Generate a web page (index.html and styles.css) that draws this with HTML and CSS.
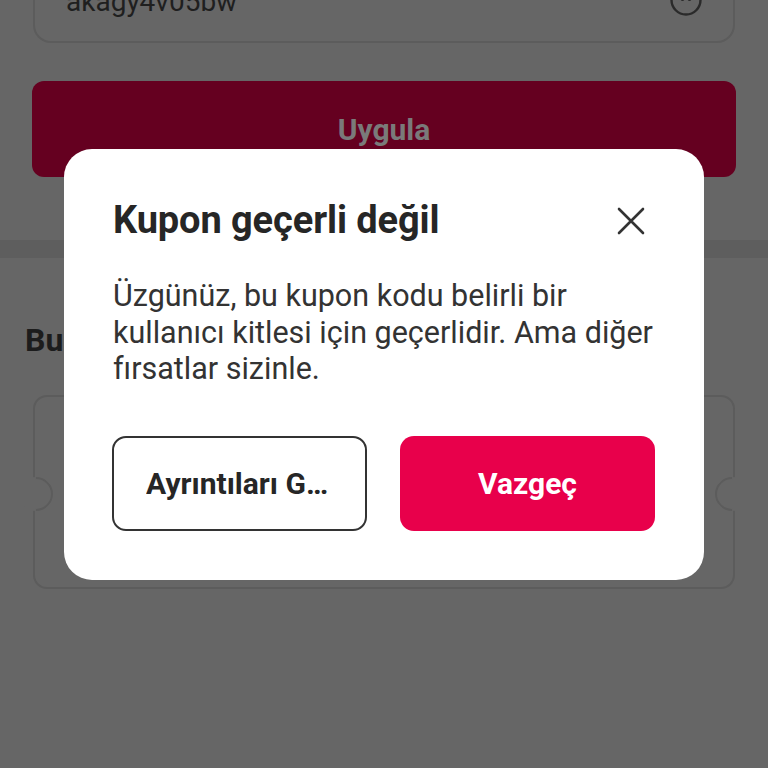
FILE: index.html
```html
<!DOCTYPE html>
<html lang="tr">
<head>
<meta charset="utf-8">
<title>Kupon</title>
<link rel="stylesheet" href="styles.css">
</head>
<body>
<main class="page">
  <section class="coupon-form">
    <div class="code-input">
      <span class="code-value">akagy4v05bw</span>
      <svg class="code-icon" width="34" height="34" viewBox="0 0 34 34" aria-hidden="true">
        <circle cx="17" cy="17" r="14.5" fill="none" stroke="#2a2a2a" stroke-width="2.4"/>
        <circle cx="13.5" cy="16" r="1.9" fill="#2a2a2a"/>
        <circle cx="20.5" cy="16" r="1.9" fill="#2a2a2a"/>
      </svg>
    </div>
    <button class="apply-btn" type="button">Uygula</button>
  </section>
  <div class="divider"></div>
  <section class="offers">
    <h2 class="offers-title">Bu sipariş için kuponlar</h2>
    <div class="coupon-card"></div>
  </section>
</main>

<div class="scrim">
  <div class="dialog" role="dialog" aria-labelledby="dlg-title">
    <div class="dialog-head">
      <h1 class="dialog-title" id="dlg-title">Kupon geçerli değil</h1>
      <button class="dialog-close" type="button" aria-label="Kapat">
        <svg width="30" height="30" viewBox="0 0 30 30" aria-hidden="true">
          <path d="M3 3 L27 27 M27 3 L3 27" stroke="#333" stroke-width="2.6" stroke-linecap="round" fill="none"/>
        </svg>
      </button>
    </div>
    <p class="dialog-text">Üzgünüz, bu kupon kodu belirli bir kullanıcı kitlesi için geçerlidir. Ama diğer fırsatlar sizinle.</p>
    <div class="dialog-actions">
      <button class="btn btn-outline" type="button"><span class="btn-label">Ayrıntıları Görüntüle</span></button>
      <button class="btn btn-primary" type="button"><span class="btn-label">Vazgeç</span></button>
    </div>
  </div>
</div>
</body>
</html>
```
FILE: styles.css
```css
* { box-sizing: border-box; }

html, body {
  margin: 0;
  height: 768px;
  overflow: hidden;
}

body {
  background: #666666;
  font-family: Roboto, "Noto Sans", sans-serif;
  color: #222;
}

/* ---- dimmed page behind the dialog ---- */
.coupon-form {
  margin-top: -53px;
  padding: 0 32px 63px;
}

.code-input {
  height: 96px;
  margin: 0 1px;
  border: 2px solid #5c5c5c;
  border-radius: 18px;
  display: flex;
  align-items: center;
  justify-content: space-between;
  padding: 0 30px 0 31px;
}

.code-value {
  font-size: 28px;
  color: #1f1f1f;
  margin-top: 12px;
}

.code-icon { display: block; margin-top: 10px; }

.apply-btn {
  display: block;
  width: 100%;
  height: 96px;
  margin-top: 38px;
  border: 0;
  border-radius: 12px;
  background: #650020;
  color: #7a7a7a;
  font-family: inherit;
  font-size: 30px;
  font-weight: 700;
}

.divider {
  height: 18px;
  background: #5e5e5e;
}

.offers {
  padding: 64px 33px 0 25px;
}

.offers-title {
  margin: 0;
  font-size: 32px;
  line-height: 36px;
  font-weight: 700;
  color: #1c1c1c;
  white-space: nowrap;
}

.coupon-card {
  position: relative;
  margin: 37px 0 0 8px;
  height: 194px;
  border: 2px solid #5c5c5c;
  border-radius: 14px;
}

/* ticket notches: a half arc cut into each side */
.coupon-card::before,
.coupon-card::after {
  content: "";
  position: absolute;
  top: 50%;
  width: 30px;
  height: 30px;
  margin-top: -15px;
  border: 2px solid transparent;
  border-radius: 50%;
  background: #666666;
}
.coupon-card::before {
  left: -16px;
  border-top-color: #5c5c5c;
  border-right-color: #5c5c5c;
  transform: rotate(45deg);
}
.coupon-card::after {
  right: -16px;
  border-bottom-color: #5c5c5c;
  border-left-color: #5c5c5c;
  transform: rotate(45deg);
}

/* ---- dialog ---- */
.scrim {
  position: fixed;
  inset: 0;
}

.dialog {
  position: absolute;
  left: 64px;
  top: 149px;
  width: 640px;
  padding: 50px 49px 49px 48px;
  background: #fff;
  border-radius: 28px;
}

.dialog-head {
  display: flex;
  align-items: center;
  justify-content: space-between;
}

.dialog-title {
  margin: 0 0 0 1px;
  font-size: 38px;
  line-height: 42px;
  font-weight: 700;
  color: #262626;
  letter-spacing: -0.1px;
}

.dialog-close {
  border: 0;
  padding: 0;
  margin: 2px 9px 0 0;
  background: none;
  width: 30px;
  height: 30px;
}
.dialog-close svg { display: block; }

.dialog-text {
  margin: 37px 0 0 1px;
  font-size: 30.5px;
  line-height: 36.5px;
  color: #333;
}

.dialog-actions {
  display: flex;
  justify-content: space-between;
  margin-top: 48px;
}

.btn {
  width: 255px;
  height: 95px;
  border-radius: 14px;
  font-family: inherit;
  font-size: 30px;
  font-weight: 700;
  padding: 0 32px;
}

.btn-label {
  display: block;
  overflow: hidden;
  white-space: nowrap;
  text-overflow: ellipsis;
}

.btn-outline {
  background: #fff;
  border: 2px solid #333;
  color: #262626;
}

.btn-primary {
  background: #e8004b;
  border: 0;
  color: #fff;
}
```
